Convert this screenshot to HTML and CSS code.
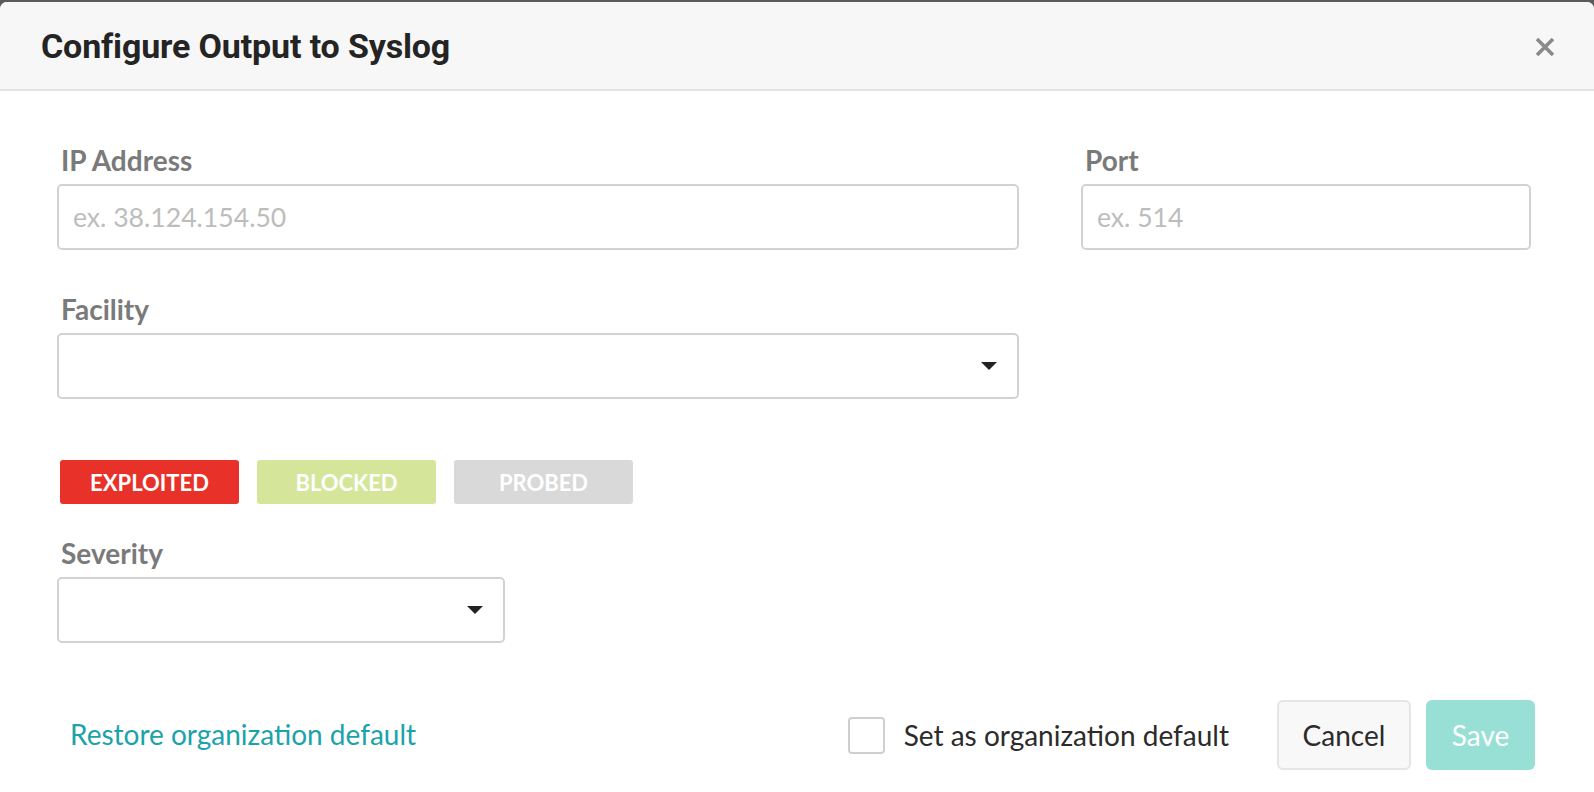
FILE: index.html
```html
<!DOCTYPE html>
<html>
<head>
<meta charset="utf-8">
<link rel="stylesheet" href="styles.css">
</head>
<body>
<div class="modal">
  <div class="modal-header">
    <h1 class="title">Configure Output to Syslog</h1>
    <button class="close" aria-label="Close">
      <svg width="22" height="22" viewBox="0 0 22 22"><path d="M3 3 L19 19 M19 3 L3 19" stroke="#8a8a8a" stroke-width="3.6" stroke-linecap="butt"/></svg>
    </button>
  </div>
  <div class="modal-body">
    <div class="row">
      <div class="field field-ip">
        <label class="label">IP Address</label>
        <div class="input"><span class="placeholder">ex. 38.124.154.50</span></div>
      </div>
      <div class="field field-port">
        <label class="label">Port</label>
        <div class="input"><span class="placeholder">ex. 514</span></div>
      </div>
    </div>
    <div class="field field-facility">
      <label class="label">Facility</label>
      <div class="input select"><span class="caret"></span></div>
    </div>
    <div class="tags">
      <span class="tag tag-exploited">EXPLOITED</span>
      <span class="tag tag-blocked">BLOCKED</span>
      <span class="tag tag-probed">PROBED</span>
    </div>
    <div class="field field-severity">
      <label class="label">Severity</label>
      <div class="input select"><span class="caret"></span></div>
    </div>
  </div>
  <div class="modal-footer">
    <a class="restore">Restore organization default</a>
    <div class="footer-right">
      <label class="check"><span class="box"></span><span class="check-text">Set as organization default</span></label>
      <button class="btn btn-cancel">Cancel</button>
      <button class="btn btn-save">Save</button>
    </div>
  </div>
</div>
</body>
</html>
```
FILE: styles.css
```css
html, body {
  margin: 0;
  padding: 0;
}
body {
  background: #5a5a5a;
  width: 1594px;
  height: 792px;
  overflow: hidden;
  font-family: Lato, "Open Sans", sans-serif;
}
.modal {
  margin-top: 2px;
  height: 790px;
  background: #fff;
  border-radius: 7px 7px 0 0;
  overflow: hidden;
  display: flex;
  flex-direction: column;
}
.modal-header {
  height: 87px;
  background: #f7f7f7;
  border-bottom: 2px solid #e3e3e3;
  display: flex;
  align-items: center;
  justify-content: space-between;
  padding: 0 38px 0 41px;
}
.title {
  margin: 0;
  font-family: Roboto, "Liberation Sans", sans-serif;
  font-weight: 700;
  font-size: 34px;
  color: #242424;
  letter-spacing: -0.15px;
}
.close {
  border: 0;
  background: transparent;
  padding: 0;
  width: 22px;
  height: 22px;
  display: flex;
  margin-top: 2px;
}
.modal-body {
  padding: 52px 63px 0 57px;
}
.row {
  display: flex;
  gap: 62px;
}
.field-ip { width: 962px; }
.field-port { width: 450px; }
.field-facility { width: 962px; margin-top: 42px; }
.field-severity { width: 448px; margin-top: 32px; }
.label {
  display: block;
  font-family: Lato, sans-serif;
  font-weight: 700;
  font-size: 28px;
  line-height: 34px;
  color: #7a7a7a;
  padding-left: 4px;
  margin-bottom: 7px;
}
.input {
  height: 62px;
  border: 2px solid #d2d2d2;
  border-radius: 5px;
  display: flex;
  align-items: center;
  padding: 0 14px;
  position: relative;
}
.placeholder {
  font-size: 26.6px;
  color: #bdbdbd;
  font-weight: 400;
}
.select {
  justify-content: flex-end;
  padding-right: 20px;
}
.caret {
  width: 0;
  height: 0;
  border-left: 8px solid transparent;
  border-right: 8px solid transparent;
  border-top: 8px solid #222;
}
.tags {
  display: flex;
  gap: 18px;
  margin-top: 61px;
  padding-left: 3px;
}
.tag {
  width: 179px;
  height: 44px;
  border-radius: 3px;
  display: flex;
  align-items: center;
  justify-content: center;
  color: #fff;
  font-weight: 700;
  font-size: 22px;
}
.tag-exploited { background: #e83128; }
.tag-blocked { background: #d5e69b; }
.tag-probed { background: #d9d9d9; }
.modal-footer {
  margin-top: auto;
  height: 90px;
  display: flex;
  align-items: flex-start;
  justify-content: space-between;
  padding: 0 59px 0 70px;
}
.restore {
  color: #1aa3a9;
  font-size: 28px;
  margin-top: 15px;
  line-height: 34px;
}
.footer-right {
  display: flex;
  align-items: center;
  margin-top: -2px;
}
.check {
  display: flex;
  align-items: center;
  gap: 19px;
  margin-right: 48px;
}
.box {
  width: 33px;
  height: 33px;
  border: 2px solid #cfcfcf;
  border-radius: 4px;
  background: #fff;
}
.check-text {
  font-size: 28px;
  color: #2b2b2b;
}
.btn {
  height: 70px;
  border-radius: 6px;
  font-family: Lato, sans-serif;
  font-size: 28px;
  padding: 0;
}
.btn-cancel {
  width: 134px;
  background: #f8f8f8;
  border: 2px solid #e6e6e6;
  color: #2b2b2b;
  margin-right: 15px;
}
.btn-save {
  width: 109px;
  background: #98e0d6;
  border: 0;
  color: #fff;
}
```
